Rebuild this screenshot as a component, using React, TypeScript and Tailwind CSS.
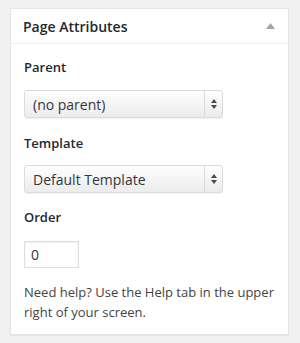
const font = { fontFamily: '"Open Sans", "Noto Sans", sans-serif' };

const SelectBox = ({ value }: { value: string }) => (
  <div className="flex h-[28px] w-[199px] items-stretch rounded-[3px] border border-[#dcdcdc] bg-gradient-to-b from-[#fefefe] to-[#ececec] shadow-[0_1px_1px_rgba(0,0,0,0.06)]">
    <div className="flex flex-1 items-center pl-[8px] text-[14px] text-[#32373c]">{value}</div>
    <div className="flex w-[18px] flex-col items-center justify-center gap-[2px] border-l border-[#dadada]">
      <svg width="6" height="4" viewBox="0 0 6 4">
        <path d="M3 0 L6 4 L0 4 Z" fill="#4a4a4a" />
      </svg>
      <svg width="6" height="4" viewBox="0 0 6 4">
        <path d="M0 0 L6 0 L3 4 Z" fill="#4a4a4a" />
      </svg>
    </div>
  </div>
);

const FieldLabel = ({ children }: { children: string }) => (
  <div className="text-[13px] font-semibold leading-[18px] text-[#23282d]">{children}</div>
);

export default function App() {
  return (
    <div className="min-h-[343px] bg-[#f1f1f1] pt-[8px] pl-[10px] pr-[11px]" style={font}>
      <div className="border border-[#e5e5e5] bg-white shadow-[0_1px_1px_rgba(0,0,0,0.04)]">
        <div className="flex h-[35px] items-center justify-between border-b border-[#eeeeee] pl-[12px] pr-[13px]">
          <span className="text-[14px] font-semibold text-[#23282d]">Page Attributes</span>
          <svg width="9" height="6" viewBox="0 0 9 6">
            <path d="M4.5 0 L9 6 L0 6 Z" fill="#a0a5aa" />
          </svg>
        </div>
        <div className="px-[13px] pt-[14px] pb-[12px]">
          <FieldLabel>Parent</FieldLabel>
          <div className="mt-[14px]">
            <SelectBox value="(no parent)" />
          </div>
          <div className="mt-[16px]">
            <FieldLabel>Template</FieldLabel>
          </div>
          <div className="mt-[13px]">
            <SelectBox value="Default Template" />
          </div>
          <div className="mt-[15px]">
            <FieldLabel>Order</FieldLabel>
          </div>
          <div className="mt-[15px] flex h-[27px] w-[55px] items-center border border-[#dddddd] pl-[6px] text-[14px] text-[#32373c] shadow-[inset_0_1px_2px_rgba(0,0,0,0.07)]">
            0
          </div>
          <p className="mt-[14px] text-[13px] leading-[20px] text-[#444444]">
            Need help? Use the Help tab in the upper right of your screen.
          </p>
        </div>
      </div>
    </div>
  );
}
